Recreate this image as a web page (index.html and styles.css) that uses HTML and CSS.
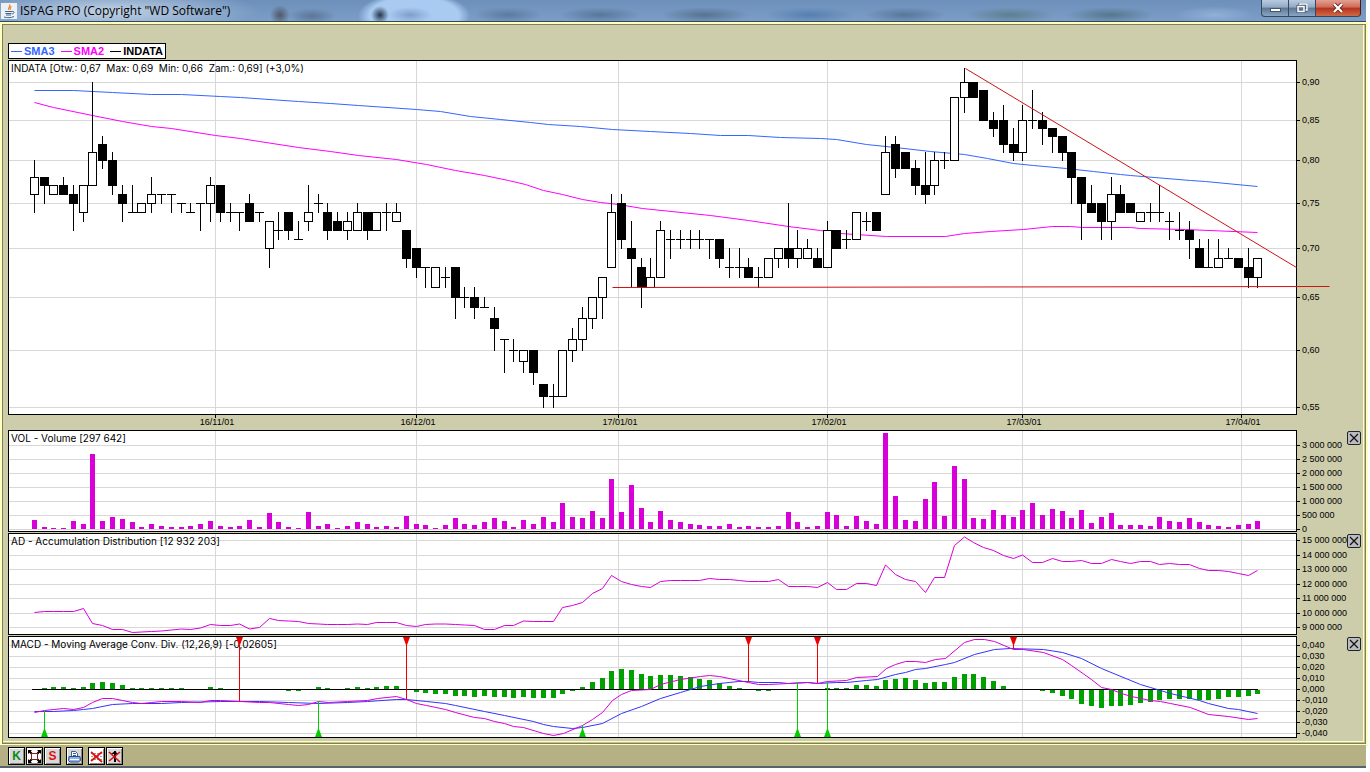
FILE: index.html
```html
<!DOCTYPE html>
<html lang="pl">
<head>
<meta charset="utf-8">
<title>ISPAG PRO</title>
<link rel="stylesheet" href="styles.css">
</head>
<body>
<div class="window">
  <header class="titlebar">
    <svg class="app-icon" viewBox="0 0 16 16" aria-hidden="true">
      <rect width="16" height="16" fill="#eef1f4"/>
      <path d="M8.5 1.5c2 2-2.500 3-.5 5.500M10.500 3.500c-2 1-1.500 2-.5 3" fill="none" stroke="#e8801c" stroke-width="1.200"/>
      <path d="M4 8.500h7M4.500 10.500h6M5 12h5M11 8.500c3-.5 2.500 2 0 2.500M3 14c3 1 7 1 10-.500" fill="none" stroke="#41668f"/>
    </svg>
    <h1 class="title">ISPAG PRO (Copyright "WD Software")</h1>
    <div class="window-buttons">
      <button class="wb" aria-label="Minimize"><svg viewBox="0 0 12 10"><rect x="1.500" y="5.500" width="10" height="3" fill="#fff" stroke="#45566b"/></svg></button>
      <button class="wb" aria-label="Restore"><svg viewBox="0 0 12 10"><path d="M4 3V1h7v6H9" fill="none" stroke="#45566b" stroke-width="3"/><path d="M4 3V1h7v6H9" fill="none" stroke="#fff" stroke-width="1.500"/><rect x="2" y="3.500" width="6" height="5" fill="#5d7694" stroke="#45566b" stroke-width="3"/><rect x="2" y="3.500" width="6" height="5" fill="#5d7694" stroke="#fff" stroke-width="1.500"/></svg></button>
      <button class="wb wb-close" aria-label="Close"><svg viewBox="0 0 12 10"><path d="M2 1l8 8M10 1L2 9" stroke="#6b2a22" stroke-width="4"/><path d="M2 1l8 8M10 1L2 9" stroke="#fff" stroke-width="2.200"/></svg></button>
    </div>
  </header>

  <main class="frame">
    <ul class="legend">
      <li class="sma3">SMA3</li>
      <li class="sma2">SMA2</li>
      <li class="indata">INDATA</li>
    </ul>
    <div class="charts">
      <section class="panel" id="price"><h2 class="caption">INDATA [Otw.: 0,67&nbsp; Max: 0,69&nbsp; Min: 0,66&nbsp; Zam.: 0,69] (+3,0%)</h2></section>
      <div class="axis" id="price-axis"></div>
      <div class="dates" id="dates"></div>
      <div></div>
      <section class="panel" id="vol"><h2 class="caption">VOL - Volume [297 642]</h2></section>
      <div class="axis" id="vol-axis"></div>
      <section class="panel" id="ad"><h2 class="caption">AD - Accumulation Distribution [12 932 203]</h2></section>
      <div class="axis" id="ad-axis"></div>
      <section class="panel" id="macd"><h2 class="caption">MACD - Moving Average Conv. Div. (12,26,9) [-0,02605]</h2></section>
      <div class="axis" id="macd-axis"></div>
    </div>
  </main>

  <footer class="toolbar">
    <div class="group">
      <button class="tool k" aria-label="K">K</button>
      <button class="tool white" aria-label="Fit"><svg viewBox="0 0 15 15"><path d="M1 1h4L1 5zM14 1v4l-4-4zM1 14v-4l4 4zM14 14h-4l4-4z" fill="#000"/><path d="M2 2l3 3M13 2l-3 3M2 13l3-3M13 13l-3-3" stroke="#000" stroke-width="2"/><rect x="4.500" y="4.500" width="6" height="6" fill="#fff" stroke="#802020"/></svg></button>
      <button class="tool s" aria-label="S">S</button>
    </div>
    <button class="tool" aria-label="Print"><svg viewBox="0 0 15 15"><path d="M4.500 7.500v-5h4l2 2v3" fill="#fff" stroke="#37609c"/><path d="M6 4.500h3M6 6.500h3" stroke="#37609c"/><path d="M2 7.500h11l.500 4-2 1.500H3l-1.500-1.500z" fill="#8fb4e4" stroke="#2a4f8c"/><path d="M3 10.500h9" stroke="#fff"/></svg></button>
    <div class="group">
      <button class="tool white" aria-label="Clear lines"><svg viewBox="0 0 15 15"><path d="M2 4.500h11M2 7.500h11M2 10.500h11" stroke="#999" stroke-dasharray="2 1"/><path d="M2 3l11 10M13 3L2 12" stroke="#e01010" stroke-width="1.800"/></svg></button>
      <button class="tool" aria-label="Clear signals"><svg viewBox="0 0 15 15"><path d="M7 2h2v11H7zM4 5l4-3v3zM8 2l3 3H8z" fill="#000"/><path d="M2 3l11 10M13 3L2 12" stroke="#d01010" stroke-width="1.600"/></svg></button>
    </div>
  </footer>
</div>
<script src="chart.js"></script>
</body>
</html>
```
FILE: styles.css
```css
* { box-sizing: border-box; }

body {
  margin: 0;
  background: #fff;
  font-family: "Liberation Sans", Arial, sans-serif;
  color: #000;
}

h1, h2, ul { margin: 0; padding: 0; font-weight: normal; }
button { padding: 0; margin: 0; font: inherit; }

.window {
  display: flex;
  flex-direction: column;
  height: 100vh;
  padding: 0 4px 4px 0;
}

.titlebar {
  display: flex;
  align-items: center;
  flex: none;
  height: 22px;
  padding-left: 1px;
  gap: 3px;
  border-bottom: 1px solid #33465e;
  background:
    radial-gradient(ellipse 150px 22px at 110px 11px, rgba(225, 235, 245, .7), transparent),
    radial-gradient(circle 10px at 280px 15px, #4f5868, transparent),
    radial-gradient(ellipse 24px 8px at 312px 16px, #5c7595, transparent),
    radial-gradient(circle 9px at 380px 15px, #26364c, transparent),
    radial-gradient(ellipse 22px 8px at 410px 15px, #7f9fc8, transparent),
    radial-gradient(ellipse 56px 24px at 414px 16px, #a9cbf2 80%, transparent),
    radial-gradient(ellipse 34px 8px at 508px 15px, #5b7a9f, transparent),
    radial-gradient(ellipse 40px 8px at 600px 15px, #587699, transparent),
    radial-gradient(ellipse 44px 8px at 705px 15px, #56738f, transparent),
    radial-gradient(ellipse 44px 8px at 810px 15px, #5680b0, transparent),
    radial-gradient(ellipse 40px 8px at 905px 15px, #587699, transparent),
    radial-gradient(ellipse 44px 8px at 1010px 15px, #5d7f90, transparent),
    radial-gradient(ellipse 44px 8px at 1110px 15px, #54788c, transparent),
    radial-gradient(ellipse 40px 9px at 1215px 15px, #8fb0d8, transparent),
    linear-gradient(#6d90bb, #7b9dc6);
}

.app-icon { width: 16px; height: 16px; }

.title {
  flex: 1;
  font-family: "Open Sans", "Noto Sans", sans-serif;
  font-size: 12px;
  line-height: 20px;
}

.window-buttons {
  display: flex;
  align-self: flex-start;
  margin-right: 5px;
}

.wb {
  display: flex;
  align-items: center;
  justify-content: center;
  width: 27px;
  height: 17px;
  border: 1px solid #35485f;
  border-top: 0;
  border-right: 0;
  background: linear-gradient(#b9cbe0, #91a9c5 45%, #5d7694 50%, #8aa5c4);
}
.wb svg { width: 12px; height: 10px; }
.wb:first-child { border-bottom-left-radius: 4px; }
.wb-close {
  width: 46px;
  border-right: 1px solid #4d1a14;
  border-bottom-right-radius: 4px;
  background: linear-gradient(#e2a094, #cf6a55 45%, #b5321c 50%, #cf6a45);
}

.frame {
  flex: 1;
  display: flex;
  flex-direction: column;
  min-height: 0;
  margin: 2px 0 0 2px;
  padding: 18px 2px 5px 5px;
  background: #cdcdab;
  border: 1px solid #7f7f5b;
  box-shadow: 0 0 0 2px #ffffc0, inset -1px -1px 0 #c3c094, inset -2px -2px 0 #ffffc0;
}

.legend {
  display: flex;
  align-self: flex-start;
  gap: 6px;
  height: 16px;
  margin-bottom: 1px;
  padding: 0 2px;
  list-style: none;
  background: #fff;
  border: 1px solid #000;
  font-size: 11px;
  font-weight: bold;
  line-height: 15px;
}
.legend li { display: flex; align-items: center; gap: 2px; }
.legend li::before { content: ""; width: 11px; height: 1px; background: currentColor; }
.sma3 { color: #3366ff; }
.sma2 { color: #ff00ff; }
.indata { color: #000; }

.charts {
  flex: 1;
  display: grid;
  grid-template-columns: 1fr 66px;
  grid-template-rows: 355fr 15px 103fr 103fr 102fr;
  min-height: 0;
}

.panel {
  position: relative;
  min-height: 0;
  background: #fff;
  border: 1px solid #000;
}
#vol, #ad { margin-bottom: 1px; }

.layer {
  position: absolute;
  inset: 0;
  width: 100%;
  height: 100%;
  overflow: visible;
}
.caption {
  position: absolute;
  left: 2px;
  top: 1px;
  font-family: Inter, "DejaVu Sans", sans-serif;
  font-size: 10px;
  line-height: 13px;
  white-space: nowrap;
}
.plot { z-index: 1; }

.grid-line { fill: #d8d8d8; }
.crisp { shape-rendering: crispEdges; }
.line { fill: none; stroke-width: 1; }
.blue { stroke: #3366ff; }
.pink { stroke: #ff00ff; }
.violet { stroke: #d800d8; }
.signal { stroke: #3333ff; }
.trend { stroke: #cc1414; }
.vol-bar { fill: #d800d8; }
.hist-bar { fill: #00a000; }
.up { fill: #fff; stroke: #000; }
.sell { fill: #ee0000; }
.buy { fill: #00cc00; }

.axis, .dates { position: relative; font-size: 9px; line-height: 11px; }
#vol-axis, #ad-axis { margin-bottom: 1px; }

.tick {
  position: absolute;
  left: 0;
  display: flex;
  align-items: center;
  gap: 2px;
  height: 11px;
  margin-top: -5px;
  white-space: nowrap;
}
.tick::before { content: ""; width: 3px; height: 1px; background: #000; }

.date {
  position: absolute;
  top: 0;
  width: 40px;
  margin-left: -18px;
  padding-top: 2px;
  text-align: center;
}
.date::before {
  content: "";
  position: absolute;
  left: 18px;
  top: 0;
  width: 1px;
  height: 3px;
  background: #000;
}

.close {
  position: absolute;
  top: 1px;
  right: 2px;
  display: flex;
  width: 14px;
  height: 14px;
  background: #bcbcc0;
  border: 1px solid #20242c;
  border-radius: 2px;
}
.close svg { width: 12px; height: 12px; }

.toolbar {
  flex: none;
  display: flex;
  gap: 5px;
  height: 24px;
  padding: 2px 8px;
  background: #b5b184;
  border-top: 1px solid #ffffc0;
  border-bottom: 2px solid #59626c;
}
.group { display: flex; gap: 1px; }
.tool {
  display: flex;
  align-items: center;
  justify-content: center;
  width: 17px;
  height: 18px;
  background: #d8d8d8;
  border: 1px solid #000;
  box-shadow: inset 1px 1px 0 #fff, inset -1px -1px 0 #888;
  font-size: 12px;
  font-weight: bold;
  line-height: 14px;
}
.tool svg { width: 15px; height: 15px; }
.white { background: #fff; }
.k { color: #0a8a1a; }
.s { color: #e01010; }
```
FILE: chart.js
```js
// Daily candles in hundredths: open, high, low, close.
const candles = `76,80,74,78 78,78,75,77 76,77,76,77 77,78,76,76 76,77,72,75 74,77,73,77 77,90,77,81 82,83,79,80 80,81,76,77 76,77,73,75
74,77,74,74 74,75,74,75 75,78,74,76 76,76,75,76 76,76,74,76 75,75,74,75 74,75,74,74 75,75,72,75 75,78,73,77 77,77,73,74
74,75,73,74 74,74,72,74 75,76,73,73 74,74,73,74 70,73,68,73 72,74,71,72 74,74,71,72 71,73,71,71 73,77,72,74 75,76,74,75
74,75,71,72 73,74,72,72 72,74,71,73 72,75,72,74 74,74,71,72 72,74,72,74 74,75,72,74 73,75,73,74 72,72,68,69 70,70,67,68
68,68,66,68 66,68,66,68 67,68,66,67 68,68,63,65 65,66,64,65 65,66,63,64 64,65,64,64 63,64,60,62 61,61,58,61 60,61,59,60
59,60,58,60 60,60,57,58 57,57,55,56 56,57,55,56 56,60,56,60 60,62,59,61 61,64,60,63 63,65,62,65 65,67,63,67 68,76,68,74
75,76,70,71 70,73,66,69 68,69,64,66 66,69,66,67 67,73,67,72 71,72,69,71 71,72,70,71 71,72,70,71 71,72,70,71 71,71,69,71
71,71,68,69 68,70,67,68 68,70,67,68 68,69,67,67 67,68,66,67 67,69,67,69 69,70,68,70 70,75,68,69 69,72,68,70 69,71,69,70
69,70,68,68 68,73,68,72 72,72,70,70 71,72,70,71 71,74,71,74 73,74,72,73 74,74,72,72 76,83,76,81 82,83,78,79 81,81,79,79
79,80,76,77 77,81,75,76 77,81,76,80 80,81,79,80 80,88,80,88 88,92,86,90 90,90,88,88 89,89,85,85 85,86,83,84 85,87,81,82
82,84,80,81 81,87,80,85 85,89,84,85 85,86,82,84 84,84,81,83 83,83,80,81 81,81,75,78 78,78,71,75 75,77,74,74 75,75,71,73
73,78,71,76 76,77,74,74 75,75,74,74 73,74,73,74 74,75,73,74 74,77,73,74 73,74,71,73 72,74,71,72 72,73,69,71 70,71,68,68
68,71,68,68 68,71,68,69 69,70,69,69 69,69,68,68 68,70,66,67 67,69,66,69`.split(/\s+/).map(c => c.split(',').map(Number));

const volume = [9,2,1,1,8,5,75,8,12,10,7,2,5,3,2,2,3,5,8,3,2,3,9,2,16,7,2,1,17,3,5,1,3,7,5,2,3,2,13,5,4,1,4,11,5,4,7,11,8,2,
9,5,12,7,26,12,11,18,11,50,17,44,21,7,18,9,7,5,4,3,3,5,2,3,2,2,3,17,7,2,3,17,14,3,13,8,5,96,33,9,8,30,47,13,63,50,11,10,19,14,
12,19,26,14,20,18,11,19,6,12,16,4,4,4,3,12,8,7,11,7,4,3,2,4,5,8];

const ad = [612,611,611,611,611,608,623,625,629,629,632,631.5,631,630.5,629.5,628.5,629,627.5,624,625,625,623.5,628.5,627,618,620,620.5,621,623,623.5,
624,624,624,623.5,624,622,622,622,625,626,624,623.5,623.5,624,624.5,625,629,629,625,625,620.5,621,621,621,607,605,602,593,588,575,581,584,586,587,
581,580,580,580,580,578,579,579,580,581,581,581,579,586,586,586,587,582,589,589,583,583,585,564.5,574,579,581,592,577,577,545,536.5,542,547,550,555,
558,554.5,562,562,558,561,561,560,563,563,559,561,563,561,561,564,563,564,564,568,570,570,571,573,575,570];

const histogram = [0,1,2,2,1,2,6,7,6,4,1,1,1,1,1,1,0,0,2,1,0,0,0,0,0,0,-1,-1,0,2,1,0,1,2,1,2,3,3,0,-2,-3,-4,-4,-6,-6,-7,-6,-7,-7,-8,
-7,-8,-8,-8,-4,-1,2,7,11,18,20,19,15,13,14,14,13,12,10,9,6,3,1,0,-1,-1,0,0,0,0,0,1,1,1,4,4,3,9,10,11,9,6,7,7,12,15,15,12,8,3,
0,0,0,-1,-3,-6,-9,-14,-16,-18,-16,-16,-15,-13,-12,-10,-9,-9,-9,-10,-10,-9,-7,-7,-6,-4];

const sma3 = '34,90 73,90 92,91 112,92 151,94 181,94 220,96 240,97 298,101 330,103 358,105 416,109 440,111 470,116 500,119 530,122 548,124 580,126 612,129 650,131 690,133 720,135 748,135 780,137 820,138 836,139 866,144 895,147 930,151 964,154 987,158 1013,163 1033,165 1066,168 1093,171 1120,174 1130,175 1190,180 1205,181 1257,186';
const sma2 = '34,102 53,107 92,115 122,121 151,126 171,128 215,135 240,138 259,141 298,147 330,151 358,155 396,159 426,164 455,170 484,175 508,180 525,184 543,190 562,194 582,199 600,202 618,204 642,208 710,215 748,220 788,226 820,230 840,233 886,236 945,236 964,233 990,231 1023,229 1052,226 1070,226 1082,227 1130,227 1140,228 1185,229 1257,232';
const macdLine = '34,712 44,710 63,708 73,709 83,707 92,702 102,698 112,698 122,700 132,702 141,703 151,702 161,701 181,701 200,702 210,700 220,700 240,701 259,702 269,702 288,704 298,705 308,704 318,701 328,702 347,701 367,700 377,698 396,696 406,699 416,703 426,705 445,709 455,712 474,717 484,718 494,721 504,723 513,726 523,727 543,733 553,735 563,733 582,725 592,719 602,712 612,700 621,694 631,690 650,689 660,684 680,679 700,676 709,675 719,676 748,682 758,684 768,684 788,683 807,682 817,683 827,681 846,680 856,677 877,676 886,668 895,664 905,661 915,661 925,662 935,659 945,658 964,642 974,639 984,639 994,641 1013,649 1023,649 1043,652 1062,659 1071,665 1091,679 1101,687 1111,689 1121,693 1131,696 1150,700 1160,701 1170,703 1190,707 1208,714 1228,716 1248,719 1257,718';
const signalLine = '34,711 53,711 73,710 83,709 92,708 112,704 132,703 161,703 181,702 220,701 259,701 288,702 318,703 347,702 367,701 396,699 406,699 426,701 445,703 455,705 484,711 504,715 533,721 543,724 553,726 572,728 582,727 602,723 621,713 641,706 660,698 680,692 690,689 700,686 719,683 738,681 748,681 758,682 778,682 788,683 807,682 817,683 836,682 846,682 866,680 877,679 895,674 905,672 915,669 925,668 945,664 954,662 974,654 994,649 1010,648 1043,649 1062,652 1081,658 1101,668 1140,684 1150,687 1170,693 1199,700 1208,703 1228,708 1238,709 1257,713';

const months = [[215, '16/11/01'], [416, '16/12/01'], [618, '17/01/01'], [827, '17/02/01'], [1022, '17/03/01'], [1241, '17/04/01']];
const LEFT = 9, WIDTH = 1287;

const xAt = i => Math.round(33.75 + 9.789 * i);
const priceY = p => Math.round(82.4 + 660 * Math.log(90 / p));
const rect = (cls, x, y, w, h) => `<rect class="${cls}" x="${x}" y="${y}" width="${w}" height="${h}"/>`;
// Half-pixel shift puts one-pixel strokes on whole pixels.
const line = (cls, pts) => `<polyline class="line ${cls}" transform="translate(.5 .5)" points="${pts}"/>`;

function layer(cls, top, height, body) {
  return `<svg class="layer ${cls}" viewBox="${LEFT} ${top} ${WIDTH} ${height}" preserveAspectRatio="none">${body}</svg>`;
}

function build(id, top, height, ticks, plot, closable) {
  const panel = document.getElementById(id);
  const grid = ticks.map(t => rect('grid-line', LEFT, t[0], WIDTH, 1)).join('') +
    months.map(m => rect('grid-line', m[0], top, 1, height)).join('');
  panel.insertAdjacentHTML('afterbegin', layer('crisp', top, height, grid));
  panel.insertAdjacentHTML('beforeend', layer('plot', top, height, plot));
  const labels = ticks.map(t =>
    `<div class="tick" style="top:${(t[0] - top + 1) / (height + 2) * 100}%">${t[1]}</div>`).join('');
  const close = closable ? '<button class="close" aria-label="Close"><svg viewBox="0 0 12 12"><path d="M2 2l8 8M10 2l-8 8" stroke="#111" stroke-width="1.200"/></svg></button>' : '';
  document.getElementById(id + '-axis').innerHTML = labels + close;
}

const candlePlot = candles.map(([o, h, l, c], i) => {
  const x = xAt(i), top = priceY(Math.max(o, c)), bottom = priceY(Math.min(o, c));
  const wick = rect('', x, priceY(h), 1, priceY(l) - priceY(h) + 1);
  const body = c > o
    ? rect('up', x - 3.5, top + .5, 8, bottom - top)
    : rect('', x - 4, top, 9, bottom - top + 1);
  return wick + body;
}).join('');

build('price', 61, 353,
  [90, 85, 80, 75, 70, 65, 60, 55].map(p => [priceY(p), '0,' + p]),
  line('blue', sma3) + line('pink', sma2) + `<g class="crisp">${candlePlot}</g>` +
  line('trend', '965,68 1296,267') + line('trend', '612,287 1329,286'));

build('vol', 431, 100,
  ['3 000 000', '2 500 000', '2 000 000', '1 500 000', '1 000 000', '500 000', '0'].map((t, i) => [445 + 14 * i, t]),
  `<g class="crisp">${volume.map((v, i) => rect('vol-bar', xAt(i) - 2, 529 - v, 5, v)).join('')}</g>`, true);

build('ad', 534, 100,
  [540, 555, 569, 584, 598, 613, 627].map((y, i) => [y, (15 - i) + ' 000 000']),
  line('violet', ad.map((y, i) => xAt(i) + ',' + y).join(' ')), true);

const sells = [[239, 701], [406, 699], [748, 682], [817, 683], [1013, 649]];
const buys = [[44, 710], [318, 701], [582, 725], [797, 682], [827, 682]];
build('macd', 637, 100,
  ['0,040', '0,030', '0,020', '0,010', '0,000', '-0,010', '-0,020', '-0,030', '-0,040'].map((t, i) => [645 + 11 * i, t]),
  `<g class="crisp">${histogram.map((v, i) => v ? rect('hist-bar', xAt(i) - 2, v > 0 ? 689 - v : 690, 5, Math.abs(v)) : '').join('')}` +
  rect('', 32, 689, 1226, 1) + '</g>' +
  line('signal', signalLine) + line('violet', macdLine) +
  sells.map(([x, y]) => rect('sell crisp', x, 637, 1, y - 637) + `<path class="sell" d="M${x - 3} 637h7l-3 8h-1z"/>`).join('') +
  buys.map(([x, y]) => rect('buy crisp', x, y, 1, 737 - y) + `<path class="buy" d="M${x - 3} 737h7l-3 -8h-1z"/>`).join(''), true);

document.getElementById('dates').innerHTML = months.map(([x, t]) =>
  `<div class="date" style="left:${(x - LEFT + 1) / (WIDTH + 2) * 100}%">${t}</div>`).join('');
```
